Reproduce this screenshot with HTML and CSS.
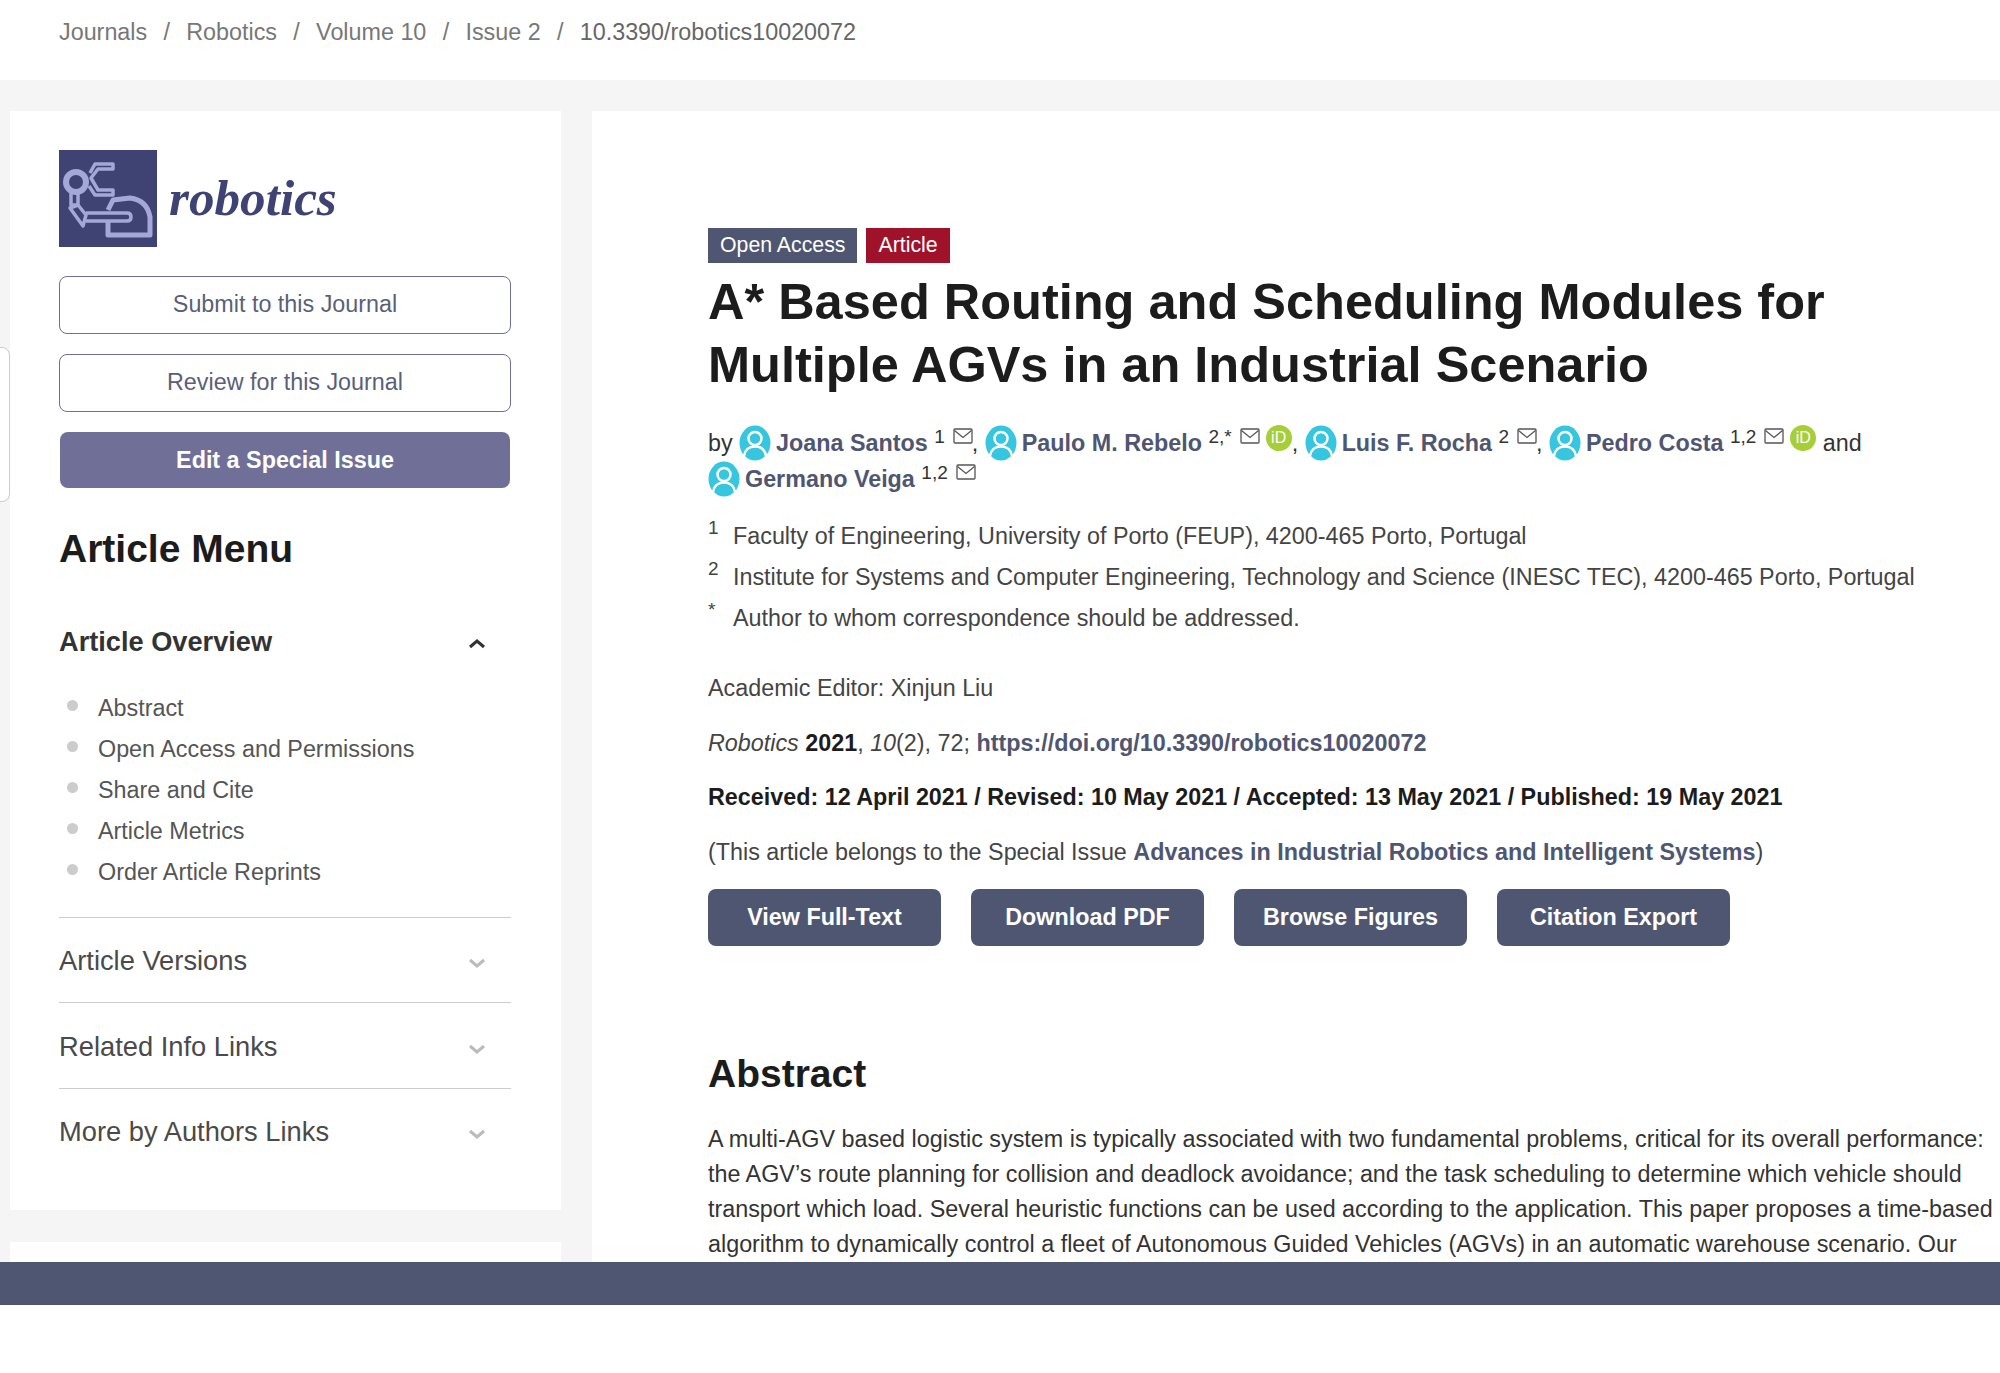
FILE: index.html
```html
<!DOCTYPE html>
<html lang="en">

<head>
    <meta charset="UTF-8">
    <meta name="viewport" content="width=device-width, initial-scale=1.0">
    <title>A* Based Routing and Scheduling Modules for Multiple AGVs in an Industrial Scenario</title>
    <link rel="stylesheet" href="styles.css">
</head>

<body>
    <svg class="defs" width="0" height="0">
        <symbol id="person" viewBox="0 0 32 36">
            <ellipse cx="16" cy="18" rx="15.5" ry="17.5" fill="#36c6e0" />
            <circle cx="16" cy="13.500" r="6.500" fill="none" stroke="#fff" stroke-width="2.500" />
            <path d="M5 31c1-6 5-9.500 11-9.500s10 3.500 11 9.500" fill="none" stroke="#fff" stroke-width="2.500" />
        </symbol>
        <symbol id="mail" viewBox="0 0 20 16">
            <rect x="1" y="1" width="18" height="14" rx="1" fill="none" stroke="#555" stroke-width="1.3" />
            <path d="M1.500 2.500 10 9.500l8.500-7" fill="none" stroke="#555" stroke-width="1.300" />
        </symbol>
    </svg>

    <nav class="crumbs">
        <a>Journals</a><i>/</i><a>Robotics</a><i>/</i><a>Volume 10</a><i>/</i><a>Issue 2</a><i>/</i><a class="current">10.3390/robotics10020072</a>
    </nav>

    <div class="page">
        <div class="sideTab"></div>
        <aside class="side">
            <div class="card">
                <div class="logo">
                    <svg class="logoMark" viewBox="0 0 98 97">
                        <rect width="98" height="97" fill="#3e4374" />
                        <g fill="none" stroke="#a3a8d8" stroke-linejoin="round">
                            <circle cx="17" cy="32" r="10" stroke-width="6" />
                            <path d="M31 23 36 14H54V19H39L32 28 39 40H54V45H36L30 36" stroke-width="3.500" />
                            <path d="M12 43V55H19V43" stroke-width="3.500" />
                            <path d="M11 58 19 55 27 65 24 76Z" stroke-width="3.500" />
                            <path d="M27 63H68Q72 63 72 67T68 71H27" stroke-width="3.500" />
                            <path d="M49 60 54 50 71 48Q88 50 91 67V85H49V72" stroke-width="5" />
                        </g>
                    </svg>
                    <span class="logoText">robotics</span>
                </div>
                <a class="btn">Submit to this Journal</a>
                <a class="btn">Review for this Journal</a>
                <a class="btn btnFull">Edit a Special Issue</a>

                <h2 class="menuTitle">Article Menu</h2>

                <div class="overview">
                    <span>Article Overview</span>
                    <svg class="chev" viewBox="0 0 18 10"><path d="M2 8l7-6 7 6" fill="none" stroke="#333" stroke-width="3" /></svg>
                </div>
                <ul class="menuList">
                    <li>Abstract</li>
                    <li>Open Access and Permissions</li>
                    <li>Share and Cite</li>
                    <li>Article Metrics</li>
                    <li>Order Article Reprints</li>
                </ul>
                <div class="menuRow">
                    <span>Article Versions</span>
                    <svg class="chev" viewBox="0 0 18 10"><path d="M2 2l7 6 7-6" fill="none" stroke="#bbb" stroke-width="3" /></svg>
                </div>
                <div class="menuRow">
                    <span>Related Info Links</span>
                    <svg class="chev" viewBox="0 0 18 10"><path d="M2 2l7 6 7-6" fill="none" stroke="#bbb" stroke-width="3" /></svg>
                </div>
                <div class="menuRow">
                    <span>More by Authors Links</span>
                    <svg class="chev" viewBox="0 0 18 10"><path d="M2 2l7 6 7-6" fill="none" stroke="#bbb" stroke-width="3" /></svg>
                </div>
            </div>
            <div class="card cardNext"></div>
        </aside>

        <main class="article">
            <div class="tags"><span class="tag">Open Access</span><span class="tag tagRed">Article</span></div>
            <h1>A* Based Routing and Scheduling Modules for<br>Multiple AGVs in an Industrial Scenario</h1>
            <div class="authors">
                by <svg class="person"><use href="#person" /></svg> <b>Joana Santos</b> <sup>1</sup> <svg class="mail"><use href="#mail" /></svg>,
                <svg class="person"><use href="#person" /></svg> <b>Paulo M. Rebelo</b> <sup>2,*</sup> <svg class="mail"><use href="#mail" /></svg> <span class="orcid">iD</span>,
                <svg class="person"><use href="#person" /></svg> <b>Luis F. Rocha</b> <sup>2</sup> <svg class="mail"><use href="#mail" /></svg>,
                <svg class="person"><use href="#person" /></svg> <b>Pedro Costa</b> <sup>1,2</sup> <svg class="mail"><use href="#mail" /></svg> <span class="orcid">iD</span> and<br>
                <svg class="person"><use href="#person" /></svg> <b>Germano Veiga</b> <sup>1,2</sup> <svg class="mail"><use href="#mail" /></svg>
            </div>
            <div class="affil">
                <div class="affilRow"><sup>1</sup><span>Faculty of Engineering, University of Porto (FEUP), 4200-465 Porto, Portugal</span></div>
                <div class="affilRow"><sup>2</sup><span>Institute for Systems and Computer Engineering, Technology and Science (INESC TEC), 4200-465 Porto, Portugal</span></div>
                <div class="affilRow"><sup>*</sup><span>Author to whom correspondence should be addressed.</span></div>
            </div>
            <div class="meta">
                <p>Academic Editor: Xinjun Liu</p>
                <p><em>Robotics</em> <b class="dark">2021</b>, <em>10</em>(2), 72; <b>https://doi.org/10.3390/robotics10020072</b></p>
                <p><b class="dark">Received: 12 April 2021 / Revised: 10 May 2021 / Accepted: 13 May 2021 / Published: 19 May 2021</b></p>
                <p>(This article belongs to the Special Issue <b>Advances in Industrial Robotics and Intelligent Systems</b>)</p>
            </div>
            <div class="actions">
                <a class="action">View Full-Text</a>
                <a class="action">Download PDF</a>
                <a class="action">Browse Figures</a>
                <a class="action">Citation Export</a>
            </div>
            <h2 class="absTitle">Abstract</h2>
            <p class="absText">A multi-AGV based logistic system is typically associated with two fundamental problems, critical for its overall performance:<br>the AGV’s route planning for collision and deadlock avoidance; and the task scheduling to determine which vehicle should<br>transport which load. Several heuristic functions can be used according to the application. This paper proposes a time-based<br>algorithm to dynamically control a fleet of Autonomous Guided Vehicles (AGVs) in an automatic warehouse scenario. Our</p>
        </main>
    </div>
    <div class="bottomBar"></div>
</body>

</html>
```

FILE: styles.css
```css
* {
    margin: 0;
    padding: 0;
    box-sizing: border-box;
    list-style: none;
}

html,
body {
    height: 1373px;
    overflow: hidden;
}

body {
    background-color: #fff;
    font-family: "Liberation Sans", Arial, sans-serif;
    font-size: 23.33px;
    color: #4a4a4a;
}

.defs {
    position: absolute;
}

.crumbs {
    height: 80px;
    padding: 14px 0 0 59px;
    line-height: 36px;
    color: #777;
}

.crumbs i {
    font-style: normal;
    margin: 0 16.300px;
}

.crumbs .current {
    color: #666;
}

.page {
    position: relative;
    display: flex;
    gap: 31px;
    height: 1182px;
    padding: 31px 0 0 10px;
    background-color: #f5f5f5;
    overflow: hidden;
}

.sideTab {
    position: absolute;
    left: -10px;
    top: 267px;
    width: 20px;
    height: 155px;
    border: 1px solid #ccc;
    border-radius: 8px;
    background-color: #fff;
}

.side {
    flex: 0 0 551px;
}

.card {
    padding: 39px 50px 37px 49px;
    background-color: #fff;
}

.cardNext {
    height: 80px;
    margin-top: 32px;
}

.logo {
    display: flex;
    align-items: center;
    gap: 12px;
    margin-bottom: 29px;
}

.logoMark {
    width: 98px;
    height: 97px;
}

.logoText {
    margin-top: -3px;
    font-family: "Liberation Serif", serif;
    font-weight: bold;
    font-style: italic;
    font-size: 51.200px;
    color: #3e4374;
}

.btn {
    display: block;
    height: 58px;
    margin-bottom: 20px;
    border: 1px solid #6f7096;
    border-radius: 8px;
    line-height: 55px;
    text-align: center;
    color: #5a5f78;
}

.btnFull {
    height: 56px;
    margin: 0 1px;
    border: 0;
    background-color: #6f6f97;
    color: #fff;
    font-weight: bold;
    line-height: 56px;
}

.menuTitle {
    margin-top: 37px;
    font-size: 39px;
    line-height: 48px;
    color: #1c1c1c;
}

.overview {
    display: flex;
    justify-content: space-between;
    align-items: center;
    margin-top: 48.500px;
    padding-right: 25px;
    font-size: 27.200px;
    font-weight: bold;
    line-height: 40px;
    color: #333;
}

.chev {
    width: 18px;
    height: 10px;
    margin-top: 4px;
}

.menuList {
    margin-top: 26.500px;
    padding-bottom: 23.500px;
}

.menuList li {
    position: relative;
    padding-left: 39px;
    line-height: 41px;
    color: #555;
}

.menuList li::before {
    content: "";
    position: absolute;
    left: 8px;
    top: 12px;
    width: 11px;
    height: 11px;
    border-radius: 50%;
    background-color: #ccc;
}

.menuRow {
    display: flex;
    justify-content: space-between;
    align-items: center;
    height: 85.500px;
    padding: 3px 25px 0 0;
    border-top: 1px solid #ccc;
    font-size: 27.300px;
    color: #4a4a4a;
}

.article {
    flex: 1;
    padding: 117px 0 0 116px;
    background-color: #fff;
    white-space: nowrap;
}

.tags {
    display: flex;
    gap: 9px;
}

.tag {
    height: 35px;
    padding: 0 12px;
    font-size: 21.300px;
    line-height: 35px;
    background-color: #4f5671;
    color: #fff;
}

.tagRed {
    background-color: #a0122a;
}

h1 {
    margin-top: 8px;
    font-size: 50.500px;
    line-height: 62.500px;
    color: #1c1c1c;
}

.authors {
    margin-top: 29px;
    line-height: 36px;
    color: #333;
}

.authors b,
.meta b {
    color: #4f5671;
}

.authors sup,
.affil sup {
    font-size: 19px;
    line-height: 0;
    vertical-align: 8px;
}

.person {
    width: 32px;
    height: 36px;
    margin-right: -1.500px;
    vertical-align: -10px;
}

.mail {
    width: 20px;
    height: 16px;
    margin: 0 -1px 0 1.500px;
    vertical-align: 7px;
}

.orcid {
    display: inline-block;
    width: 26px;
    height: 26px;
    margin-left: 0.500px;
    border-radius: 50%;
    background-color: #a6ce39;
    color: #fff;
    font-size: 16px;
    line-height: 26px;
    text-align: center;
    vertical-align: 8px;
}

.affil {
    margin-top: 19px;
    color: #444;
}

.affilRow {
    display: flex;
    line-height: 41px;
}

.affilRow sup {
    flex: 0 0 25px;
    line-height: 24px;
    vertical-align: baseline;
}

.meta {
    margin-top: 29px;
    color: #444;
}

.meta p {
    line-height: 40px;
    margin-bottom: 14.600px;
}

.meta .dark {
    color: #1c1c1c;
}

.actions {
    display: flex;
    gap: 30px;
    margin-top: 17.500px;
}

.action {
    width: 233px;
    height: 57px;
    border-radius: 8px;
    background-color: #4f5671;
    color: #fff;
    font-weight: bold;
    line-height: 57px;
    text-align: center;
}

.absTitle {
    margin-top: 102.300px;
    font-size: 39px;
    line-height: 50px;
    color: #1c1c1c;
}

.absText {
    margin-top: 23.200px;
    line-height: 35px;
    color: #333;
}

.bottomBar {
    height: 43px;
    background-color: #4f5671;
}
```
